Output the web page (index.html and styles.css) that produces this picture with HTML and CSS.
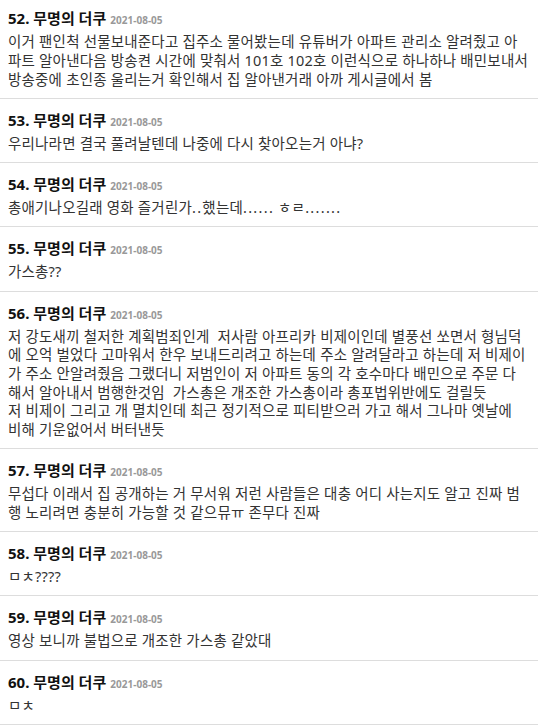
FILE: index.html
```html
<!DOCTYPE html>
<html lang="ko">
<head>
<meta charset="utf-8">
<title>댓글</title>
<link rel="stylesheet" href="styles.css">
</head>
<body>
<ul class="comments">
  <li class="item">
    <div class="head"><span class="name">52. 무명의 더쿠</span> <span class="date">2021-08-05</span></div>
    <div class="body">이거 팬인척 선물보내준다고 집주소 물어봤는데 유튜버가 아파트 관리소 알려줬고 아<br>파트 알아낸다음 방송켠 시간에 맞춰서 101호 102호 이런식으로 하나하나 배민보내서<br>방송중에 초인종 울리는거 확인해서 집 알아낸거래 아까 게시글에서 봄</div>
  </li>
  <li class="item">
    <div class="head"><span class="name">53. 무명의 더쿠</span> <span class="date">2021-08-05</span></div>
    <div class="body">우리나라면 결국 풀려날텐데 나중에 다시 찾아오는거 아냐?</div>
  </li>
  <li class="item">
    <div class="head"><span class="name">54. 무명의 더쿠</span> <span class="date">2021-08-05</span></div>
    <div class="body">총애기나오길래 영화 즐거린가<span class="dots">..</span>했는데<span class="dots">......</span> ㅎㄹ<span class="dots">.......</span></div>
  </li>
  <li class="item">
    <div class="head"><span class="name">55. 무명의 더쿠</span> <span class="date">2021-08-05</span></div>
    <div class="body">가스총??</div>
  </li>
  <li class="item">
    <div class="head"><span class="name">56. 무명의 더쿠</span> <span class="date">2021-08-05</span></div>
    <div class="body">저 강도새끼 철저한 계획범죄인게 &nbsp;저사람 아프리카 비제이인데 별풍선 쏘면서 형님덕<br>에 오억 벌었다 고마워서 한우 보내드리려고 하는데 주소 알려달라고 하는데 저 비제이<br>가 주소 안알려줬음 그랬더니 저범인이 저 아파트 동의 각 호수마다 배민으로 주문 다<br>해서 알아내서 범행한것임 &nbsp;가스총은 개조한 가스총이라 총포법위반에도 걸릴듯<br>저 비제이 그리고 개 멸치인데 최근 정기적으로 피티받으러 가고 해서 그나마 옛날에<br>비해 기운없어서 버터낸듯</div>
  </li>
  <li class="item">
    <div class="head"><span class="name">57. 무명의 더쿠</span> <span class="date">2021-08-05</span></div>
    <div class="body">무섭다 이래서 집 공개하는 거 무서워 저런 사람들은 대충 어디 사는지도 알고 진짜 범<br>행 노리려면 충분히 가능할 것 같으뮤ㅠ 존무다 진짜</div>
  </li>
  <li class="item">
    <div class="head"><span class="name">58. 무명의 더쿠</span> <span class="date">2021-08-05</span></div>
    <div class="body">ㅁㅊ????</div>
  </li>
  <li class="item">
    <div class="head"><span class="name">59. 무명의 더쿠</span> <span class="date">2021-08-05</span></div>
    <div class="body">영상 보니까 불법으로 개조한 가스총 같았대</div>
  </li>
  <li class="item">
    <div class="head"><span class="name">60. 무명의 더쿠</span> <span class="date">2021-08-05</span></div>
    <div class="body">ㅁㅊ</div>
  </li>
</ul>
</body>
</html>
```

FILE: styles.css
```css
html, body {
  margin: 0;
  padding: 0;
  background: #fff;
}
body {
  font-family: "Noto Sans", "Noto Sans CJK KR", sans-serif;
  color: #333;
}
.comments {
  list-style: none;
  margin: 0;
  padding: 0;
}
.item {
  padding: 11px 5px 9.5px 8px;
  border-bottom: 1px solid #ddd;
}
.item:first-child {
  padding-top: 8.4px;
}
.head {
  line-height: 20px;
  height: 20px;
  white-space: nowrap;
}
.name {
  font-size: 15px;
  font-weight: bold;
  color: #111;
}
.date {
  font-size: 10px;
  font-weight: bold;
  color: #999;
}
.body {
  font-size: 14.5px;
  line-height: 18.7px;
  letter-spacing: 0.2px;
  margin-top: 4px;
}
.dots {
  letter-spacing: 1.3px;
}
```
